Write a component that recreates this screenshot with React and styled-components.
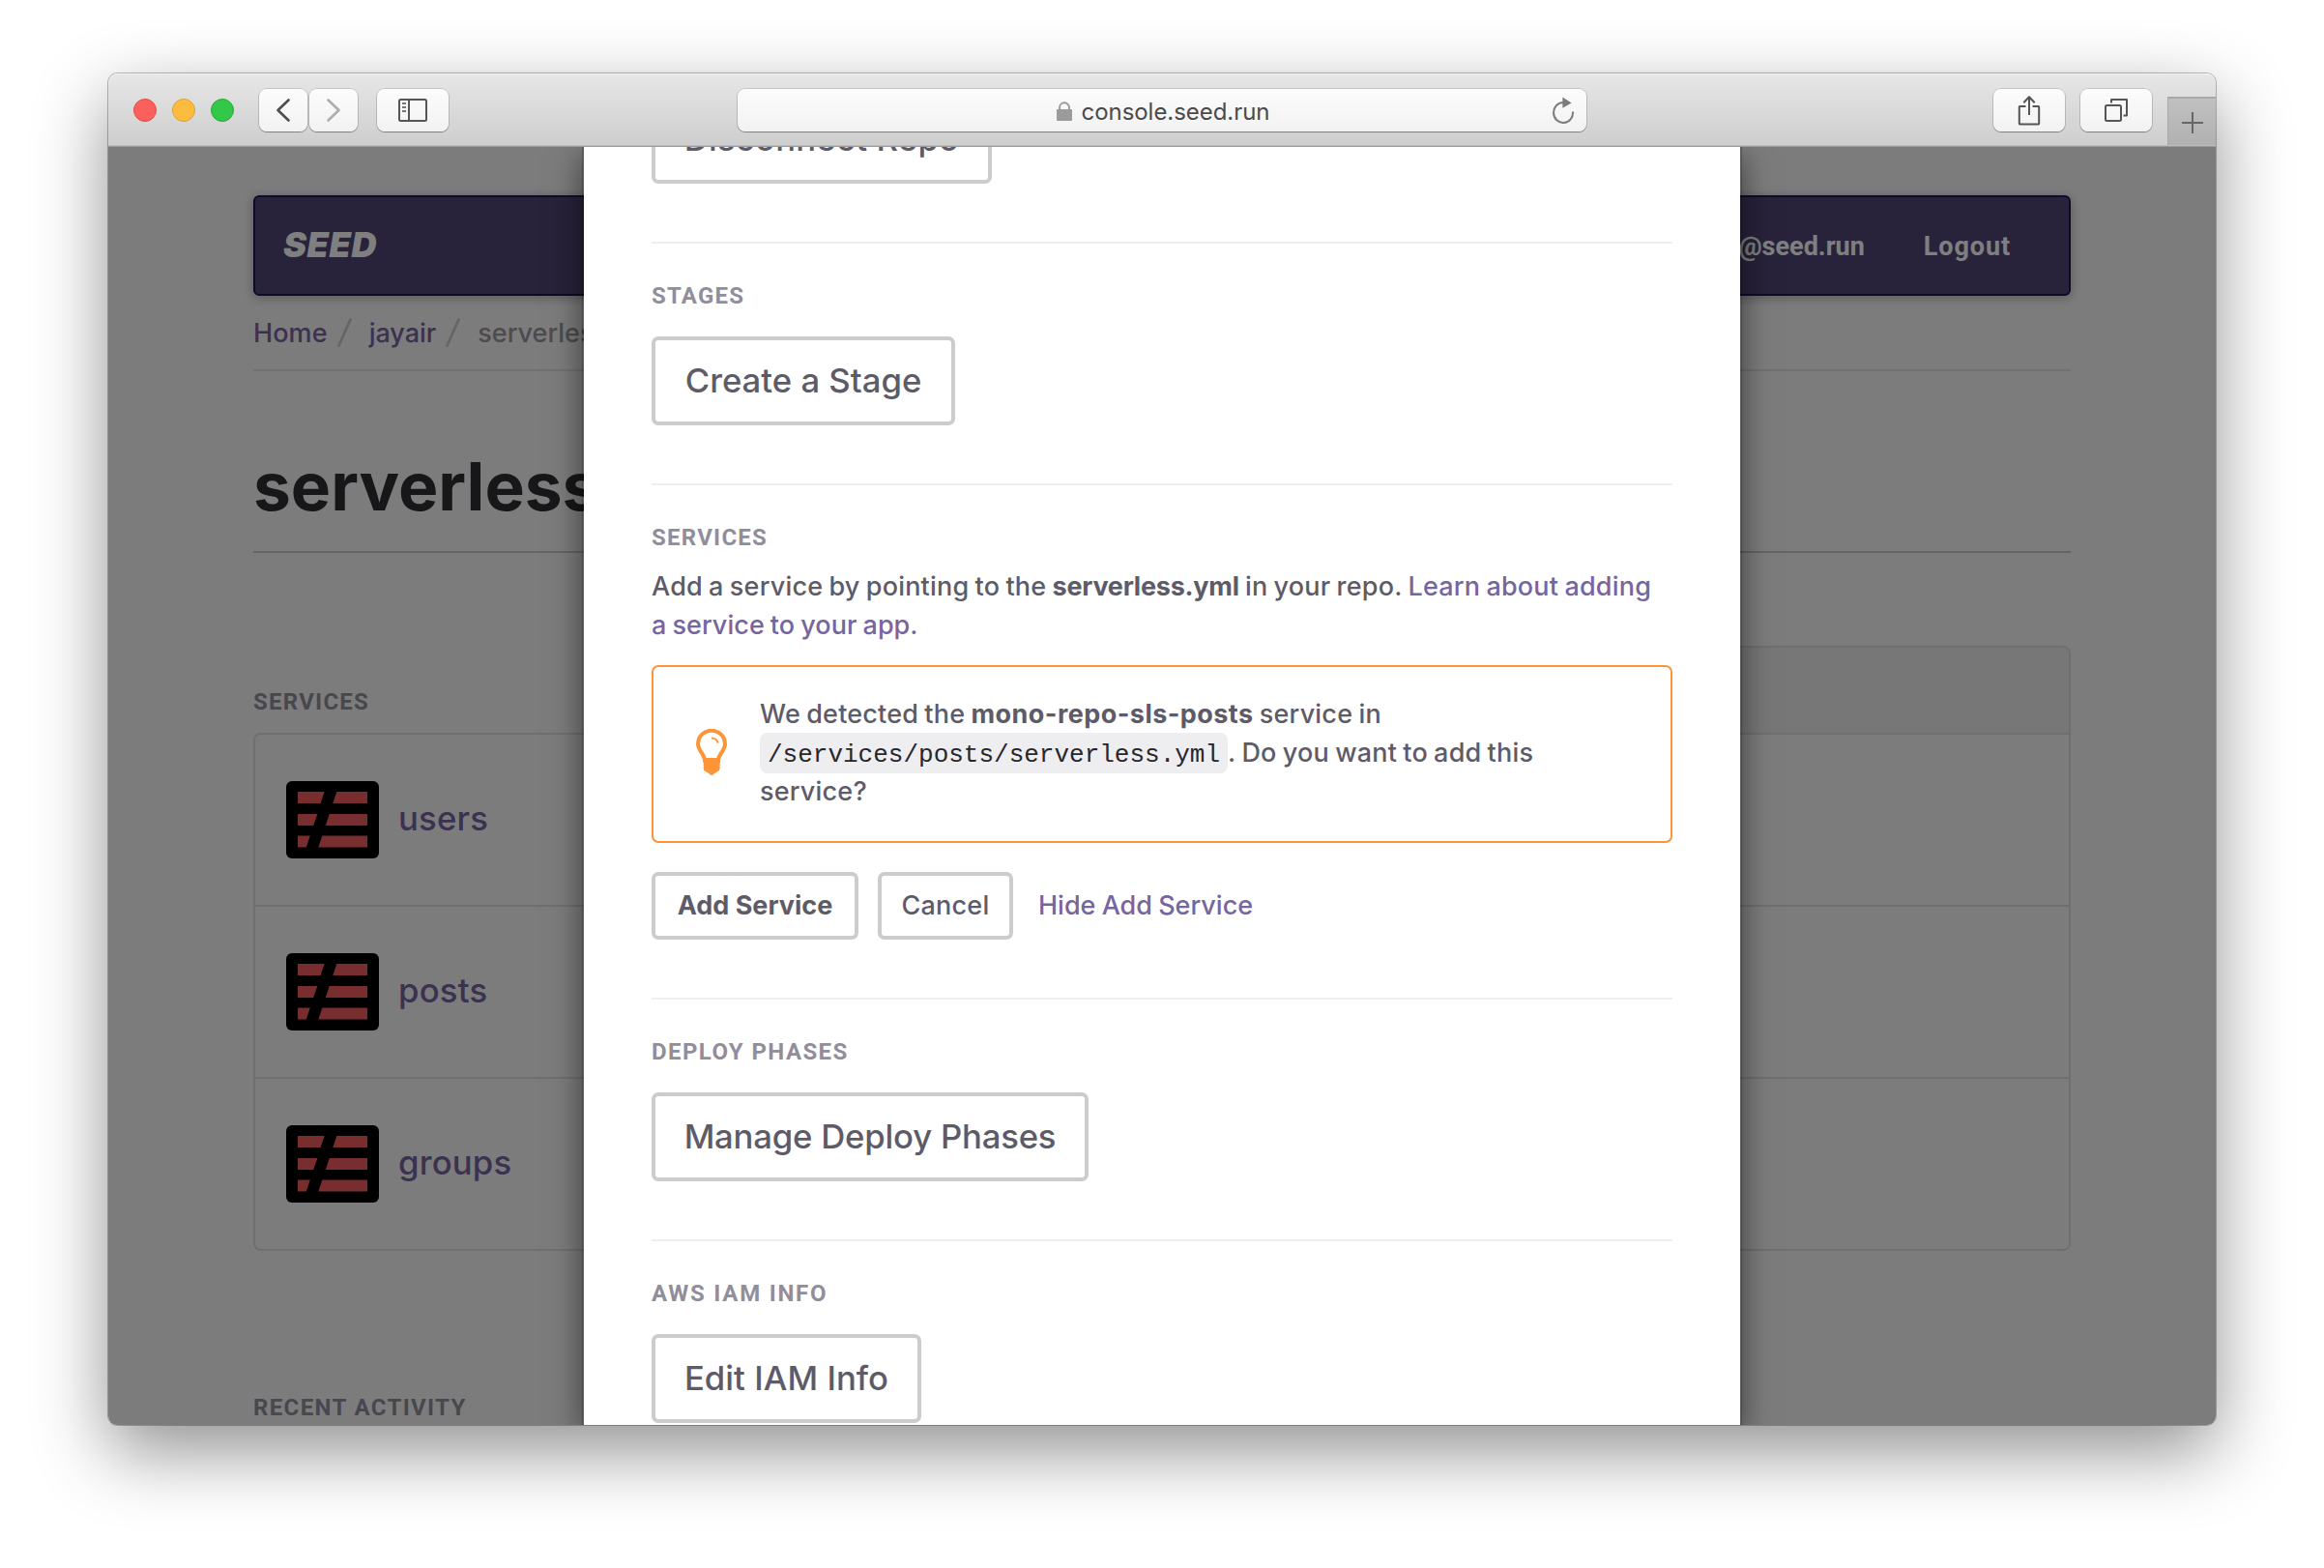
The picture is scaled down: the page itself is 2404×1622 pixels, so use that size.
import React from 'react';
import styled, { createGlobalStyle, css } from 'styled-components';

const sans = `Inter, "Liberation Sans", sans-serif`;
const square = `Roboto, "Liberation Sans", sans-serif`;

const GlobalStyle = createGlobalStyle`
  *, *::before, *::after { box-sizing: border-box; }
  html, body { margin: 0; background: #fff; }
  body { font-family: ${sans}; height: 1622px; overflow: hidden; }
`;

/* ---------- browser window ---------- */

const Desktop = styled.div`
  height: 1622px;
  padding: 76px 112px 148px;
  background: #fff;
`;

const Window = styled.div`
  height: 1398px;
  display: flex;
  flex-direction: column;
  border-radius: 10px;
  box-shadow: 0 0 0 1px rgba(0, 0, 0, 0.26), 0 27px 76px rgba(0, 0, 0, 0.44);
`;

const Toolbar = styled.header`
  height: 76px;
  flex: none;
  display: grid;
  grid-template-columns: 1fr 878px 1fr;
  align-items: start;
  border-radius: 10px 10px 0 0;
  background: linear-gradient(#e7e7e7, #cdcdcd);
  box-shadow: inset 0 1px 0 #f4f4f4, inset 0 -1px 0 #999, inset 0 -2px 0 #bcbcbc;
`;

const ToolGroup = styled.div`
  height: 76px;
  display: flex;
  align-items: flex-start;
  padding-top: 16px;
  ${(p) => p.$end && css`justify-content: flex-end; gap: 16px;`}
`;

const Lights = styled.div`
  display: flex;
  gap: 16px;
  padding: 10px 26px 0;
`;

const Light = styled.span`
  width: 24px;
  height: 24px;
  border-radius: 50%;
  background: ${(p) => p.$fill};
  border: 1px solid ${(p) => p.$edge};
`;

const ToolButton = styled.button`
  width: ${(p) => p.$width}px;
  height: 44px;
  margin: 0 ${(p) => p.$gap || 0}px 0 0;
  padding: 0;
  border: 0;
  display: flex;
  align-items: center;
  justify-content: center;
  border-radius: 8px;
  background: linear-gradient(#fcfcfc, #f2f2f2);
  box-shadow: 0 0 0 1px rgba(0, 0, 0, 0.13), 0 1px 1px 0 rgba(0, 0, 0, 0.3);
`;

const AddressBar = styled.div`
  height: 44px;
  margin-top: 16px;
  display: grid;
  grid-template-columns: 48px 1fr 48px;
  align-items: center;
  border-radius: 8px;
  background: linear-gradient(#fcfcfc, #f2f2f2);
  box-shadow: 0 0 0 1px rgba(0, 0, 0, 0.13), 0 1px 1px 0 rgba(0, 0, 0, 0.3);
`;

const Address = styled.div`
  grid-column: 2;
  display: flex;
  align-items: center;
  justify-content: center;
  gap: 10px;
  padding: 2px 0 0 2px;
  color: #4a4a4a;
  font-size: 24px;
  line-height: 44px;
  letter-spacing: -0.05px;

  svg { margin-bottom: 2px; }
`;

const NewTab = styled.button`
  width: 50px;
  height: 50px;
  padding: 2px 0 0;
  margin: 8px 0 0;
  border: solid #a9a9a9;
  border-width: 2px 0 0 1px;
  background: linear-gradient(#c0c0c0, #b1b1b1);
  display: flex;
  align-items: center;
  justify-content: center;
`;

const Viewport = styled.main`
  position: relative;
  flex: 1;
  overflow: hidden;
  border-radius: 0 0 9px 9px;
  background: #f9f9f9;
`;

/* ---------- page behind the dialog ---------- */

const Page = styled.div`
  padding: 50px 150px 0;
`;

const Navbar = styled.nav`
  height: 104px;
  display: flex;
  align-items: center;
  padding: 0 60px 0 29px;
  border: 2px solid #1e1450;
  border-radius: 6px;
  background: #504474;
  box-shadow: 0 2px 12px rgba(0, 0, 0, 0.3);
  color: #fff;
`;

const Brand = styled.span`
  margin-right: auto;
  padding-bottom: 2px;
  font: italic 900 36px/44px ${sans};
  letter-spacing: 0.6px;
`;

const NavLink = styled.a`
  margin-left: 61px;
  padding-top: 2px;
  font: 700 27px/40px ${square};
  letter-spacing: ${(p) => p.$track || 0}px;
`;

const Crumbs = styled.div`
  display: flex;
  align-items: center;
  margin-top: 18px;
  height: 60px;
  padding-bottom: 18px;
  border-bottom: 2px solid #e2e2e2;
  font-size: 27px;
  font-weight: 450;
  line-height: 40px;
  letter-spacing: 0.2px;
  color: #98969f;
`;

const Crumb = styled.a`
  margin-top: 2px;
  color: ${(p) => (p.$current ? '#98969f' : '#76649f')};
  letter-spacing: ${(p) => p.$track || 0}px;
`;

const Slash = styled.svg`
  flex: none;
  margin: 0 ${(p) => p.$after}px 0 10px;
`;

const Title = styled.h1`
  margin: 77px 0 0;
  padding-bottom: 25px;
  border-bottom: 2px solid #c8c8c8;
  font-size: 69.4px;
  line-height: 84px;
  font-weight: 700;
  color: #2f2f33;
`;

const Label = styled.h4`
  margin: 0;
  font: 700 24px/28px ${square};
  letter-spacing: ${(p) => p.$track}px;
  color: #918e9c;
`;

const Columns = styled.div`
  display: flex;
  margin-top: 96px;
`;

const ServiceColumn = styled.section`
  width: 440px;
  padding-top: 44px;
`;

const ServiceList = styled.div`
  margin-top: 18px;
  border: solid #dfdfdf;
  border-width: 2px 0 2px 2px;
  border-radius: 8px 0 0 8px;
`;

const Service = styled.div`
  height: 178px;
  display: flex;
  align-items: center;
  gap: 20px;
  padding: 0 0 0 32px;
  color: #76649f;
  font-size: 34.7px;
  font-weight: 450;
  line-height: 44px;
  letter-spacing: 0.2px;

  & + & { border-top: 2px solid #dfdfdf; }
  &:first-child { height: 176px; }
`;

const ServiceName = styled.a`
  padding-bottom: 5px;
`;

const StageColumn = styled.section`
  flex: 1;
  border: solid #dfdfdf;
  border-width: 2px 2px 2px 0;
  border-radius: 0 8px 8px 0;
`;

const StageHead = styled.div`
  height: 88px;
  background: #eeeeee;
  border-radius: 0 6px 0 0;
`;

const StageCell = styled.div`
  height: 178px;
  border-top: 2px solid #dfdfdf;
`;

const Activity = styled.section`
  margin-top: 148px;
`;

/* ---------- dialog ---------- */

const Backdrop = styled.div`
  position: absolute;
  inset: 0;
  display: flex;
  justify-content: center;
  background: rgba(0, 0, 0, 0.5);
`;

const Dialog = styled.div`
  width: 1200px;
  height: 100%;
  padding: 0 70px;
  background: #fff;
  background-clip: padding-box;
  border: solid rgba(0, 0, 0, 0.2);
  border-width: 0 2px;
  box-shadow: 0 10px 30px rgba(0, 0, 0, 0.5);
`;

const Scrolled = styled.div`
  margin-top: -54px;
`;

const Section = styled.section`
  & + & {
    margin-top: 60px;
    padding-top: 40px;
    border-top: 2px solid #eee;
  }
`;

const BigButton = styled.button`
  display: flex;
  align-items: center;
  justify-content: center;
  width: ${(p) => p.$width}px;
  height: 92px;
  margin: ${(p) => (p.$first ? 0 : 28)}px 0 0;
  padding: 0 0 2px;
  border: 4px solid #ccc;
  border-radius: 7px;
  background: #fff;
  color: #5e5b69;
  font: 450 34.7px/42px ${sans};
  letter-spacing: ${(p) => p.$track || 0}px;
  white-space: nowrap;
`;

const Text = styled.p`
  margin: 17px 0 21px;
  font-size: 27px;
  font-weight: 450;
  line-height: 40px;
  letter-spacing: 0.2px;
  word-spacing: -1.2px;
  color: #5e5b69;
  white-space: nowrap;
`;

const Strong = styled.b`
  font-weight: 700;
  letter-spacing: ${(p) => p.$track || 0}px;
`;

const Link = styled.a`
  color: #76659f;
  letter-spacing: ${(p) => p.$track || 0}px;
`;

const Alert = styled.div`
  height: 184px;
  display: flex;
  align-items: flex-start;
  padding: 29px 60px 31px 44px;
  border: 2px solid #fd9537;
  border-radius: 7px;
`;

const Bulb = styled.svg`
  flex: none;
  margin: 35px 34px 0 0;
`;

const AlertText = styled.p`
  margin: 0;
  font-size: 27px;
  font-weight: 450;
  line-height: 40px;
  letter-spacing: 0.2px;
  word-spacing: -1.2px;
  color: #5e5b69;
`;

const Code = styled.code`
  padding: 8px 8px 4px;
  border-radius: 8px;
  background: #eeeef1;
  color: #27262c;
  font: 26px/30px "Liberation Mono", monospace;
  letter-spacing: 0;
`;

const Actions = styled.div`
  display: flex;
  align-items: center;
  margin-top: 30px;
`;

const SmallButton = styled.button`
  width: ${(p) => p.$width}px;
  height: 70px;
  margin: 0 ${(p) => p.$gap}px 0 0;
  padding: 0 0 2px;
  border: 4px solid #ccc;
  border-radius: 7px;
  background: #fff;
  color: #5e5b69;
  font: ${(p) => (p.$bold ? 700 : 450)} 27px/1 ${sans};
  letter-spacing: ${(p) => p.$track || 0}px;
`;

const ActionLink = styled(Link)`
  font-size: 27px;
  font-weight: 450;
  line-height: 40px;
  word-spacing: -1px;
`;

/* ---------- drawings ---------- */

const stroke = { fill: 'none', stroke: '#555', strokeWidth: 2, strokeLinejoin: 'round' };

const Chevron = ({ forward }) => (
  <svg width="16" height="26" viewBox="0 0 16 26">
    <path
      d={forward ? 'M2.5 2.5 13.5 13 2.5 23.5' : 'M13.5 2.5 2.5 13 13.5 23.5'}
      fill="none"
      stroke={forward ? '#adadad' : '#4d4d4d'}
      strokeWidth="2.6"
      strokeLinecap="round"
      strokeLinejoin="round"
    />
  </svg>
);

const SidebarIcon = () => (
  <svg width="30" height="24" viewBox="0 0 30 24">
    <g {...stroke}>
      <rect x="1" y="1" width="28" height="22" rx="1.5" />
      <path d="M11 1v22" />
      <path d="M4 5h4M4 9h4M4 13h4" stroke="#777" strokeWidth="1.8" />
    </g>
  </svg>
);

const LockIcon = () => (
  <svg width="16" height="20" viewBox="0 0 16 20">
    <rect x="0" y="8" width="16" height="12" rx="1" fill="#9b9b9b" />
    <path d="M3 9V6.5a5 5.2 0 0 1 10 0V9" fill="none" stroke="#9b9b9b" strokeWidth="2" />
  </svg>
);

const Reload = styled.svg`
  justify-self: end;
  margin: 0 12px 2px 0;
`;

const ReloadIcon = () => (
  <Reload width="24" height="28" viewBox="0 0 24 28">
    <path d="M22 15.500A10 10.500 0 1 1 12 6" fill="none" stroke="#7c7c7c" strokeWidth="2" />
    <path d="M11.400 0.600 20.600 6.400 11.400 11.800z" fill="#7c7c7c" />
  </Reload>
);

const ShareIcon = () => (
  <svg width="24" height="32" viewBox="0 0 24 32">
    <g {...stroke}>
      <path d="M8.500 12H2.400a.6.6 0 0 0-.6.6v17.200c0 .4.2.6.6.6h19.200c.4 0 .6-.2.6-.6V12.600a.6.6 0 0 0-.6-.6H15.500" />
      <path d="M12 21V2.500M6.300 8.200 12 2.200l5.700 6" />
    </g>
  </svg>
);

const TabsIcon = () => (
  <svg width="24" height="24" viewBox="0 0 24 24">
    <g {...stroke}>
      <rect x="1" y="7" width="16" height="16" rx="1.5" />
      <path d="M7 4.500V1h16v16.500h-3.500" />
    </g>
  </svg>
);

const PlusIcon = () => (
  <svg width="22" height="22" viewBox="0 0 22 22">
    <path d="M11 0v22M0 11h22" stroke="#666" strokeWidth="2" />
  </svg>
);

const CrumbSlash = ({ after }) => (
  <Slash $after={after} width="15" height="30" viewBox="0 0 15 30">
    <path d="M1.500 28.500 13.500 1.500" stroke="#cbcbcb" strokeWidth="2.800" strokeLinecap="round" />
  </Slash>
);

const ServerlessLogo = () => (
  <svg width="96" height="80" viewBox="0 0 96 80">
    <rect width="96" height="80" rx="6" fill="#000" />
    <g fill="#f05a5c">
      <path d="M12 11h27.600L35.600 23H12zM52.300 11H84v12H48.300z" />
      <path d="M12 34h20.400L28.200 46H12zM44.700 34H84v12H40.800z" />
      <path d="M12 56.500h12.800L20.800 68.500H12zM37.300 56.500H84v12H33.300z" />
    </g>
  </svg>
);

const BulbIcon = () => (
  <Bulb width="32" height="48" viewBox="0 0 32 48">
    <path
      d="M9 32C8.500 26 2 22.500 2 15.200a14 13.400 0 0 1 28 0C30 22.500 23.500 26 23 32z"
      fill="none"
      stroke="#fd9537"
      strokeWidth="4"
    />
    <path d="M16 9.500c3.600 0 6.300 2.200 6.600 5.200" fill="none" stroke="#fd9537" strokeWidth="2" />
    <path
      d="M7.500 31h17.500v4.200l-.8 1 .8 1.200-.8 1.300.8 1.300-.8 1.300.2 1.500-4 2.500-4.200 3-4.200-3-4-2.500.2-1.500-.8-1.300.8-1.300-.8-1.300.8-1.200-.8-1z"
      fill="#fd9537"
    />
  </Bulb>
);

export default function App() {
  return (
    <Desktop>
      <GlobalStyle />
      <Window>
        <Toolbar>
          <ToolGroup>
            <Lights>
              <Light $fill="#fc605c" $edge="#e24b47" />
              <Light $fill="#fdbc40" $edge="#dfa033" />
              <Light $fill="#34c84a" $edge="#27aa35" />
            </Lights>
            <ToolButton $width={50} $gap={2}><Chevron /></ToolButton>
            <ToolButton $width={50} $gap={20}><Chevron forward /></ToolButton>
            <ToolButton $width={74}><SidebarIcon /></ToolButton>
          </ToolGroup>
          <AddressBar>
            <Address><LockIcon />console.seed.run</Address>
            <ReloadIcon />
          </AddressBar>
          <ToolGroup $end>
            <ToolButton $width={74}><ShareIcon /></ToolButton>
            <ToolButton $width={74}><TabsIcon /></ToolButton>
            <NewTab><PlusIcon /></NewTab>
          </ToolGroup>
        </Toolbar>

        <Viewport>
          <Page>
            <Navbar>
              <Brand>SEED</Brand>
              <NavLink>@seed.run</NavLink>
              <NavLink $track={0.9}>Logout</NavLink>
            </Navbar>
            <Crumbs>
              <Crumb $track={0.1}>Home</Crumb>
              <CrumbSlash after={18} />
              <Crumb>jayair</Crumb>
              <CrumbSlash after={18} />
              <Crumb $current>serverless</Crumb>
            </Crumbs>
            <Title>serverless</Title>
            <Columns>
              <ServiceColumn>
                <Label $track={1.25}>SERVICES</Label>
                <ServiceList>
                  {['users', 'posts', 'groups'].map((name) => (
                    <Service key={name}>
                      <ServerlessLogo />
                      <ServiceName>{name}</ServiceName>
                    </Service>
                  ))}
                </ServiceList>
              </ServiceColumn>
              <StageColumn>
                <StageHead />
                <StageCell />
                <StageCell />
                <StageCell />
              </StageColumn>
            </Columns>
            <Activity><Label $track={1.36}>RECENT ACTIVITY</Label></Activity>
          </Page>

          <Backdrop>
            <Dialog>
              <Scrolled>
                <Section>
                  <BigButton $first $width={352} $track={0.2}>Disconnect Repo</BigButton>
                </Section>
                <Section>
                  <Label $track={1.2}>STAGES</Label>
                  <BigButton $width={314}>Create a Stage</BigButton>
                </Section>
                <Section>
                  <Label $track={1.25}>SERVICES</Label>
                  <Text>
                    Add a service by pointing to the <Strong $track={-0.25}>serverless.yml</Strong> in your repo.{' '}
                    <Link $track={0.2}>Learn about adding</Link>
                    <br />
                    <Link $track={0.05}>a service to your app.</Link>
                  </Text>
                  <Alert>
                    <BulbIcon />
                    <AlertText>
                      We detected the <Strong $track={0.45}>mono-repo-sls-posts</Strong> service in{' '}
                      <Code>/services/posts/serverless.yml</Code>. Do you want to add this service?
                    </AlertText>
                  </Alert>
                  <Actions>
                    <SmallButton $bold $width={214} $gap={20}>Add Service</SmallButton>
                    <SmallButton $width={140} $gap={26} $track={0.2}>Cancel</SmallButton>
                    <ActionLink>Hide Add Service</ActionLink>
                  </Actions>
                </Section>
                <Section>
                  <Label $track={1.4}>DEPLOY PHASES</Label>
                  <BigButton $width={452} $track={-0.2}>Manage Deploy Phases</BigButton>
                </Section>
                <Section>
                  <Label $track={1.75}>AWS IAM INFO</Label>
                  <BigButton $width={279} $track={0.05}>Edit IAM Info</BigButton>
                </Section>
              </Scrolled>
            </Dialog>
          </Backdrop>
        </Viewport>
      </Window>
    </Desktop>
  );
}
